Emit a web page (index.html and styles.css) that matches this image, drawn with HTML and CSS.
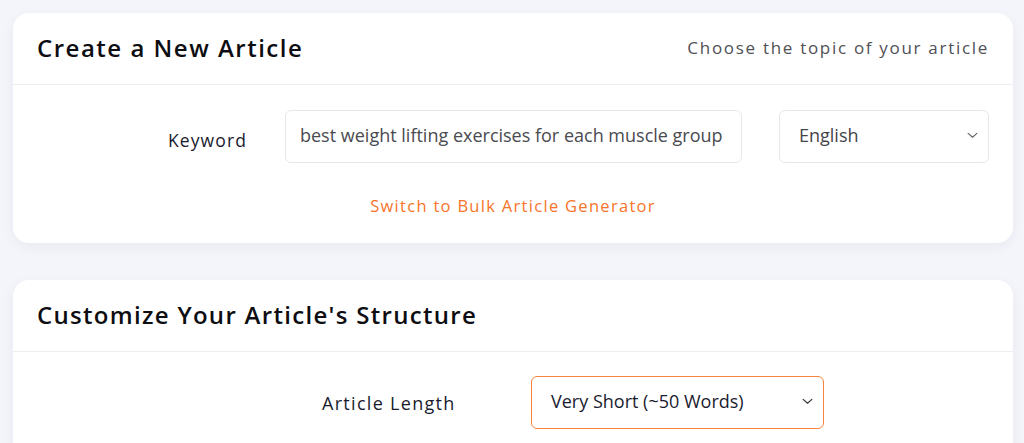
FILE: index.html
```html
<!DOCTYPE html>
<html lang="en">
<head>
<meta charset="utf-8">
<title>Create a New Article</title>
<link rel="stylesheet" href="styles.css">
</head>
<body>
<main class="page">
  <section class="card">
    <header class="card-head">
      <h2 class="card-title">Create a New Article</h2>
      <p class="card-sub">Choose the topic of your article</p>
    </header>
    <div class="card-body">
      <div class="row keyword-row">
        <label class="field-label kw-label" for="kw">Keyword</label>
        <input id="kw" class="text-input" type="text" value="best weight lifting exercises for each muscle group">
        <div class="select lang-select">
          <span class="select-value">English</span>
          <svg class="chev" viewBox="0 0 12 8" width="11" height="7"><path d="M1 1.5 L6 6 L11 1.5" fill="none" stroke="#666" stroke-width="1.3" stroke-linecap="round" stroke-linejoin="round"/></svg>
        </div>
      </div>
      <a class="switch-link" href="#">Switch to Bulk Article Generator</a>
    </div>
  </section>

  <section class="card card-2">
    <header class="card-head">
      <h2 class="card-title">Customize Your Article's Structure</h2>
    </header>
    <div class="card-body body-2">
      <div class="row length-row">
        <span class="field-label len-label">Article Length</span>
        <div class="select len-select">
          <span class="select-value dark">Very Short (~50 Words)</span>
          <svg class="chev" viewBox="0 0 12 8" width="11" height="7"><path d="M1 1.5 L6 6 L11 1.5" fill="none" stroke="#333" stroke-width="1.3" stroke-linecap="round" stroke-linejoin="round"/></svg>
        </div>
      </div>
    </div>
  </section>
</main>
</body>
</html>
```
FILE: styles.css
```css
* { box-sizing: border-box; }
html, body { margin: 0; padding: 0; }
body {
  background: #f4f5fa;
  font-family: "Open Sans", "DejaVu Sans", sans-serif;
  height: 443px;
  overflow: hidden;
}
.page {
  padding: 13px 11px 0 13px;
  display: flex;
  flex-direction: column;
  gap: 37px;
  height: 443px;
  overflow: hidden;
}
.card {
  background: #fff;
  border-radius: 16px;
  box-shadow: 0 4px 14px rgba(30, 40, 90, 0.05);
  flex-shrink: 0;
}
.card-head {
  height: 72px;
  border-bottom: 1px solid #eceef3;
  display: flex;
  align-items: center;
  justify-content: space-between;
  padding: 0 24px 3px;
}
.card-title {
  margin: 0;
  font-size: 24px;
  font-weight: 600;
  letter-spacing: 1.5px;
  color: #0d0d12;
}
.card-2 .card-title { letter-spacing: 1.3px; }
.card-sub {
  margin: 0;
  font-size: 17px;
  letter-spacing: 1.7px;
  color: #505055;
}
.card-body {
  padding: 25px 24px 0;
  height: 158px;
  display: flex;
  flex-direction: column;
  align-items: stretch;
}
.row {
  display: flex;
  align-items: center;
}
.keyword-row { padding-left: 131px; }
.field-label {
  font-size: 17.5px;
  letter-spacing: 1.1px;
  color: #1a1b2e;
}
.kw-label { width: 117px; padding-top: 6px; }
.text-input {
  width: 457px;
  height: 53px;
  border: 1px solid #e6e8ee;
  border-radius: 6px;
  padding: 0 14px 3px;
  font-family: inherit;
  font-size: 18px;
  color: #4a4a4f;
  outline: none;
}
.select {
  height: 53px;
  border: 1px solid #e6e8ee;
  border-radius: 6px;
  display: flex;
  align-items: center;
  justify-content: space-between;
  padding: 0 10px 3px 19px;
}
.lang-select { width: 210px; margin-left: 37px; }
.select-value { font-size: 18px; color: #444448; }
.select-value.dark { color: #1a1b2e; }
.switch-link {
  align-self: center;
  margin-top: 31px;
  font-size: 16.5px;
  letter-spacing: 1.3px;
  color: #f7742a;
  text-decoration: none;
}
.body-2 { padding-top: 24px; }
.length-row { padding-left: 285px; }
.len-label { width: 209px; font-size: 18px; letter-spacing: 1.3px; }
.len-select {
  width: 293px;
  border-color: #f7843e;
}
```
